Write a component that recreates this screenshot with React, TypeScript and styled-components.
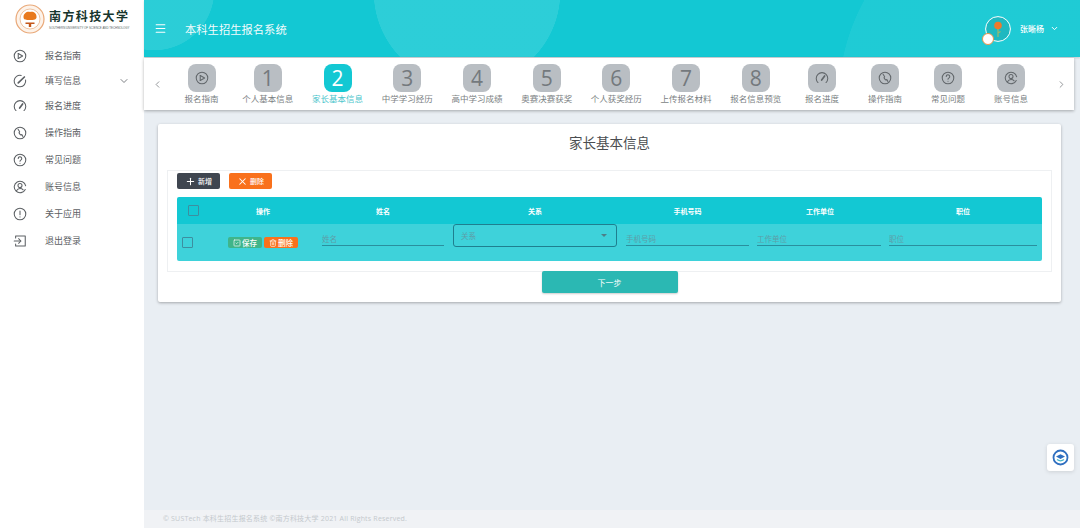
import React from "react";
import styled, { createGlobalStyle } from "styled-components";
import {
  ChevronDown,
  ChevronLeft,
  ChevronRight,
  Menu,
  Plus,
  SquareCheck,
  Trash2,
  X,
} from "lucide-react";

const FONT = `"Noto Sans CJK SC", "Open Sans", "Noto Sans", sans-serif`;
const TEAL = "#13c8d3";

const GlobalStyle = createGlobalStyle`
  html, body {
    margin: 0;
    padding: 0;
    height: 528px;
    overflow: hidden;
    background: #e9eef3;
    font-family: ${FONT};
  }
  * { box-sizing: border-box; }
`;

const Glyph = ({ children }: { children: React.ReactNode }) => (
  <svg
    width="14"
    height="14"
    viewBox="0 0 16 16"
    fill="none"
    stroke="currentColor"
    strokeWidth="1.2"
    strokeLinecap="round"
    strokeLinejoin="round"
  >
    {children}
  </svg>
);

const PlayIcon = () => (
  <Glyph>
    <circle cx="8" cy="8" r="6.6" />
    <path d="M6 5.2 11 8l-5 2.8" />
    <path d="M6 5.2v5.6" />
  </Glyph>
);
const EditIcon = () => (
  <Glyph>
    <path d="M14.4 6.8A6.6 6.6 0 1 1 9.4 1.6" />
    <path d="M6 10.2 13 3.4" strokeWidth="1.9" />
  </Glyph>
);
const GaugeIcon = () => (
  <Glyph>
    <path d="M3.4 13.2a6.6 6.6 0 1 1 9.2 0" />
    <path d="M7.6 10.4 11 5.6" strokeWidth="1.9" />
  </Glyph>
);
const PhoneIcon = () => (
  <Glyph>
    <circle cx="8" cy="8" r="6.6" />
    <path d="M5.8 3.8 7.6 6.6 6.9 7.8c.5 1.2 1.2 2 2.2 2.6l1-.6 1.2 2.2" />
  </Glyph>
);
const HelpIcon = () => (
  <Glyph>
    <circle cx="8" cy="8" r="6.6" />
    <path d="M6 6.3a2 2 0 1 1 3.2 1.6c-.8.5-1.2.9-1.2 1.6" />
    <path d="M8 11.6h.01" />
  </Glyph>
);
const UserIcon = () => (
  <Glyph>
    <path d="M14.5 6.6A6.6 6.6 0 1 0 14 10.8" />
    <circle cx="8" cy="6.4" r="2.3" />
    <path d="M4 12.4c.9-1.8 2.4-2.6 4-2.6 1.4 0 2.7.4 3.6 1.4" />
  </Glyph>
);
const AlertIcon = () => (
  <Glyph>
    <circle cx="8" cy="8" r="6.6" />
    <path d="M8 4.6v4.2" />
    <path d="M8 11.3h.01" />
  </Glyph>
);
const ExitIcon = () => (
  <Glyph>
    <path d="M3 4.6V2.200h11v11.600H3v-2.400" />
    <path d="M1.400 8h7.400" />
    <path d="M6.400 5.400 9 8l-2.600 2.600" />
  </Glyph>
);

const menu = [
  { label: "报名指南", Icon: PlayIcon },
  { label: "填写信息", Icon: EditIcon, arrow: true },
  { label: "报名进度", Icon: GaugeIcon },
  { label: "操作指南", Icon: PhoneIcon },
  { label: "常见问题", Icon: HelpIcon },
  { label: "账号信息", Icon: UserIcon },
  { label: "关于应用", Icon: AlertIcon },
  { label: "退出登录", Icon: ExitIcon },
];

const steps: { label: string; num?: number; Icon?: () => React.JSX.Element; active?: boolean }[] = [
  { label: "报名指南", Icon: PlayIcon },
  { label: "个人基本信息", num: 1 },
  { label: "家长基本信息", num: 2, active: true },
  { label: "中学学习经历", num: 3 },
  { label: "高中学习成绩", num: 4 },
  { label: "奥赛决赛获奖", num: 5 },
  { label: "个人获奖经历", num: 6 },
  { label: "上传报名材料", num: 7 },
  { label: "报名信息预览", num: 8 },
  { label: "报名进度", Icon: GaugeIcon },
  { label: "操作指南", Icon: PhoneIcon },
  { label: "常见问题", Icon: HelpIcon },
  { label: "账号信息", Icon: UserIcon },
];

const columns = ["操作", "姓名", "关系", "手机号码", "工作单位", "职位"];

const Logo = () => (
  <S.Logo>
    <svg width="30" height="30" viewBox="0 0 30 30">
      <circle cx="15" cy="15" r="14" fill="#fdf3ea" stroke="#e9a878" strokeWidth="1.2" />
      <circle cx="15" cy="15" r="10" fill="#fff" stroke="#eab48a" strokeWidth="0.8" />
      <path d="M8.5 13c0-4 4-6 6.500-5 3-1 6.500 1 6.500 4.500 .5 3-2.500 3.500-6.500 3.500s-6.500 0-6.500-3z" fill="#e8791d" />
      <path d="M10.500 18.500h9v1.500h-3.300v3h-2.400v-3h-3.300z" fill="#c4571a" />
    </svg>
    <S.LogoText>
      <S.LogoName>南方科技大学</S.LogoName>
      <S.LogoSub>SOUTHERN UNIVERSITY OF SCIENCE AND TECHNOLOGY</S.LogoSub>
    </S.LogoText>
  </S.Logo>
);

const App = () => (
  <S.Page>
    <GlobalStyle />
    <S.Sidebar>
      <Logo />
      <S.MenuList>
        {menu.map(({ label, Icon, arrow }) => (
          <S.MenuItem key={label}>
            <Icon />
            <span>{label}</span>
            {arrow && <S.MenuArrow size={12} strokeWidth={1.6} />}
          </S.MenuItem>
        ))}
      </S.MenuList>
    </S.Sidebar>

    <S.Main>
      <S.Header>
        <S.HeaderLeft>
          <Menu size={13} strokeWidth={2} />
          <S.AppTitle>本科生招生报名系统</S.AppTitle>
        </S.HeaderLeft>
        <S.User>
          <S.Avatar>
            <svg width="26" height="26" viewBox="0 0 26 26">
              <circle cx="13" cy="13" r="12.4" fill="#1fb8c0" stroke="#fff" strokeWidth="1" />
              <path d="M13 12v9M13 17l2.500-1.500" stroke="#9cb86a" strokeWidth="1.2" fill="none" />
              <circle cx="13" cy="9.500" r="3.800" fill="#ee7a2c" />
            </svg>
            <S.AvatarBadge />
          </S.Avatar>
          <S.UserName>张晰杨</S.UserName>
          <ChevronDown size={9} strokeWidth={2.6} />
        </S.User>
      </S.Header>

      <S.StepBar>
        <S.StepArrow>
          <ChevronLeft size={11} strokeWidth={1.6} />
        </S.StepArrow>
        <S.StepList>
          {steps.map(({ label, num, Icon, active }) => (
            <S.Step key={label} $active={active}>
              <S.StepTile $active={active}>{Icon ? <Icon /> : num}</S.StepTile>
              <S.StepLabel>{label}</S.StepLabel>
            </S.Step>
          ))}
        </S.StepList>
        <S.StepArrow>
          <ChevronRight size={11} strokeWidth={1.6} />
        </S.StepArrow>
      </S.StepBar>

      <S.Content>
        <S.Card>
          <S.CardTitle>家长基本信息</S.CardTitle>
          <S.TableBox>
            <S.Toolbar>
              <S.ToolButton $bg="#3f4650">
                <Plus size={11} strokeWidth={2.2} />
                新增
              </S.ToolButton>
              <S.ToolButton $bg="#f9711c">
                <X size={11} strokeWidth={2.2} />
                删除
              </S.ToolButton>
            </S.Toolbar>
            <S.Table>
              <S.HeadRow>
                <S.HeadCheck>
                  <S.Checkbox />
                </S.HeadCheck>
                {columns.map((c) => (
                  <S.HeadCell key={c}>{c}</S.HeadCell>
                ))}
              </S.HeadRow>
              <S.BodyRow>
                <S.RowCheck>
                  <S.Checkbox />
                </S.RowCheck>
                <S.Actions>
                  <S.SmallButton $bg="#3fb58a">
                    <SquareCheck size={8} strokeWidth={2} />
                    保存
                  </S.SmallButton>
                  <S.SmallButton $bg="#f9711c">
                    <Trash2 size={8} strokeWidth={2} />
                    删除
                  </S.SmallButton>
                </S.Actions>
                <S.Field>
                  <S.Input placeholder="姓名" />
                </S.Field>
                <S.Field $pad="0 4px 14px">
                  <S.Select>
                    关系
                    <S.Caret />
                  </S.Select>
                </S.Field>
                <S.Field>
                  <S.Input placeholder="手机号码" />
                </S.Field>
                <S.Field $pad="0 5px 15px 3px">
                  <S.Input placeholder="工作单位" />
                </S.Field>
                <S.Field $pad="0 3px 15px">
                  <S.Input placeholder="职位" />
                </S.Field>
              </S.BodyRow>
            </S.Table>
          </S.TableBox>
          <S.NextRow>
            <S.NextButton>下一步</S.NextButton>
          </S.NextRow>
        </S.Card>
        <S.FloatButton>
          <svg width="17" height="17" viewBox="0 0 17 17">
            <circle cx="8.5" cy="8.5" r="7" fill="none" stroke="#2f6fc0" strokeWidth="1.8" />
            <path d="M4 7.500 8.500 5.200 13 7.500 8.500 10z" fill="#2f6fc0" />
            <path d="M5 10.500c2.300 1.700 4.700 1.700 7 0" fill="none" stroke="#45b5c8" strokeWidth="1.2" />
          </svg>
        </S.FloatButton>
      </S.Content>

      <S.Footer>© SUSTech 本科生招生报名系统 ©南方科技大学 2021 All Rights Reserved.</S.Footer>
    </S.Main>
  </S.Page>
);

export default App;

const GRID = "32px 108px 132px 172px 133px 132px 154px 2px";

const S = {
  Page: styled.div`
    display: flex;
    width: 1080px;
    height: 528px;
    overflow: hidden;
  `,
  Sidebar: styled.aside`
    flex: 0 0 144px;
    background: #fff;
  `,
  Logo: styled.div`
    display: flex;
    align-items: center;
    gap: 4px;
    height: 38px;
    margin-bottom: -2px;
    padding-left: 15px;
  `,
  LogoText: styled.div`
    display: flex;
    flex-direction: column;
    align-items: flex-start;
    color: #17352d;
  `,
  LogoName: styled.div`
    font-size: 12px;
    line-height: 15px;
    font-weight: 700;
    letter-spacing: 1.4px;
    white-space: nowrap;
  `,
  LogoSub: styled.div`
    margin-top: 3px;
    font-family: "Liberation Sans", sans-serif;
    font-size: 2.9px;
    line-height: 5px;
    white-space: nowrap;
    color: #55665f;
  `,
  MenuList: styled.nav`
    display: flex;
    flex-direction: column;
    padding-top: 7px;
  `,
  MenuItem: styled.div`
    display: flex;
    align-items: center;
    height: 25px;
    padding-left: 13px;
    font-size: 9px;
    color: #5c6064;
    &:nth-child(n + 4) {
      margin-top: 2px;
    }
    span {
      margin-left: 18px;
    }
    svg {
      flex: none;
    }
  `,
  MenuArrow: styled(ChevronDown)`
    margin-left: auto;
    margin-right: 14px;
  `,
  Main: styled.div`
    flex: 1;
    display: flex;
    flex-direction: column;
    min-width: 0;
    height: 528px;
  `,
  Header: styled.header`
    display: flex;
    align-items: center;
    justify-content: space-between;
    flex: 0 0 57px;
    padding: 0 21px 0 10px;
    color: #fff;
    background:
      radial-gradient(circle at 10px -10px, rgba(255, 255, 255, 0.1) 0 60px, transparent 60.5px),
      radial-gradient(circle at 323px -8px, rgba(255, 255, 255, 0.11) 0 93px, transparent 93.5px),
      radial-gradient(circle at 902px 100px, rgba(255, 255, 255, 0.05) 0 207px, transparent 207.5px),
      ${TEAL};
    box-shadow: 0 1px 2px rgba(0, 0, 0, 0.15);
  `,
  HeaderLeft: styled.div`
    display: flex;
    align-items: center;
    gap: 18px;
  `,
  AppTitle: styled.div`
    font-size: 11.3px;
    opacity: 0.95;
  `,
  User: styled.div`
    display: flex;
    align-items: center;
    gap: 6px;
  `,
  Avatar: styled.div`
    position: relative;
    width: 26px;
    height: 26px;
    margin-right: 3px;
  `,
  AvatarBadge: styled.div`
    position: absolute;
    left: -3px;
    bottom: -3px;
    width: 12px;
    height: 12px;
    border-radius: 50%;
    background: #fff;
    border: 1.5px solid #e8944a;
  `,
  UserName: styled.div`
    font-size: 8px;
    font-weight: 500;
  `,
  StepBar: styled.div`
    display: flex;
    align-items: center;
    flex: 0 0 52px;
    margin-top: 1px;
    margin-right: 6px;
    background: #fff;
    box-shadow: 0 1px 3px rgba(0, 0, 0, 0.3);
  `,
  StepArrow: styled.div`
    display: flex;
    align-items: center;
    justify-content: center;
    flex: 0 0 26px;
    color: #6f7377;
  `,
  StepList: styled.div`
    display: flex;
    flex: 1;
    min-width: 0;
  `,
  Step: styled.div<{ $active?: boolean }>`
    display: flex;
    flex-direction: column;
    align-items: center;
    min-width: 63px;
    padding: 0 9.35px;
    color: ${(p) => (p.$active ? "#4cc5cc" : "#7b7f83")};
  `,
  StepTile: styled.div<{ $active?: boolean }>`
    display: flex;
    align-items: center;
    justify-content: center;
    width: 28px;
    height: 28px;
    border-radius: 8px;
    font-family: "Open Sans", sans-serif;
    font-size: 21px;
    font-weight: 400;
    background: ${(p) => (p.$active ? TEAL : "#b9bec3")};
    color: ${(p) => (p.$active ? "#fff" : "#74797d")};
    svg {
      color: #62676b;
    }
  `,
  StepLabel: styled.div`
    font-size: 8.5px;
    line-height: 12px;
    white-space: nowrap;
  `,
  Content: styled.main`
    position: relative;
    flex: 1;
    padding: 14px 19px 0 14px;
  `,
  Card: styled.section`
    display: flex;
    flex-direction: column;
    height: 178px;
    background: #fff;
    border-radius: 2px;
    box-shadow: 0 1px 3px rgba(0, 0, 0, 0.3);
  `,
  CardTitle: styled.h2`
    margin: 0;
    height: 46px;
    line-height: 36px;
    text-align: center;
    font-size: 13.5px;
    font-weight: 400;
    color: #4a4d50;
  `,
  TableBox: styled.div`
    margin: 0 9px;
    height: 102px;
    padding: 2px 9px 0;
    border: 1px solid #eef0f2;
  `,
  Toolbar: styled.div`
    display: flex;
    gap: 9px;
    height: 24px;
  `,
  ToolButton: styled.div<{ $bg: string }>`
    display: flex;
    align-items: center;
    justify-content: center;
    gap: 2px;
    width: 43px;
    height: 16px;
    border-radius: 2px;
    font-size: 7px;
    font-weight: 500;
    color: #fff;
    background: ${(p) => p.$bg};
  `,
  Table: styled.div`
    border-radius: 2px;
    overflow: hidden;
  `,
  HeadRow: styled.div`
    display: grid;
    grid-template-columns: ${GRID};
    align-items: center;
    height: 27px;
    background: ${TEAL};
  `,
  HeadCell: styled.div`
    text-align: center;
    font-size: 7px;
    font-weight: 700;
    color: #fff;
  `,
  HeadCheck: styled.div`
    display: flex;
    justify-content: center;
  `,
  RowCheck: styled.div`
    display: flex;
    padding-left: 5px;
  `,
  Checkbox: styled.div`
    width: 11px;
    height: 11px;
    border: 1.5px solid #3c8fa0;
    border-radius: 1px;
  `,
  BodyRow: styled.div`
    display: grid;
    grid-template-columns: ${GRID};
    align-items: center;
    height: 37px;
    background: #3ed2da;
  `,
  Actions: styled.div`
    display: flex;
    justify-content: center;
    gap: 2px;
  `,
  SmallButton: styled.div<{ $bg: string }>`
    display: flex;
    align-items: center;
    justify-content: center;
    gap: 1px;
    width: 34px;
    height: 11px;
    border-radius: 2px;
    font-size: 7.5px;
    font-weight: 500;
    color: #fff;
    background: ${(p) => p.$bg};
  `,
  Field: styled.div<{ $pad?: string }>`
    display: flex;
    align-items: flex-end;
    height: 100%;
    padding: ${(p) => p.$pad ?? "0 5px 15px"};
  `,
  Input: styled.input`
    width: 100%;
    height: 14px;
    padding: 0 0 1px;
    border: 0;
    border-bottom: 1px solid #2a8f9e;
    border-radius: 0;
    background: transparent;
    outline: none;
    font-family: ${FONT};
    font-size: 7.5px;
    &::placeholder {
      color: #5d9ea8;
      opacity: 1;
    }
  `,
  Select: styled.div`
    position: relative;
    width: 100%;
    height: 23px;
    padding: 5px 0 0 7px;
    border: 1px solid #1f7f8f;
    border-radius: 3px;
    font-size: 7.5px;
    line-height: 11px;
    color: #5d9ea8;
  `,
  Caret: styled.div`
    position: absolute;
    right: 9px;
    top: 9px;
    border-left: 3px solid transparent;
    border-right: 3px solid transparent;
    border-top: 3px solid #4d7f88;
  `,
  NextRow: styled.div`
    display: flex;
    justify-content: center;
    margin-top: -1px;
  `,
  NextButton: styled.div`
    display: flex;
    align-items: center;
    justify-content: center;
    width: 136px;
    height: 22px;
    border-radius: 2px;
    font-size: 8px;
    color: #fff;
    background: #2bb8b3;
    box-shadow: 0 1px 2px rgba(0, 0, 0, 0.2);
  `,
  FloatButton: styled.div`
    position: absolute;
    right: 6px;
    top: 334px;
    display: flex;
    align-items: center;
    justify-content: center;
    width: 27px;
    height: 27px;
    background: #fff;
    border-radius: 3px;
    box-shadow: 0 1px 4px rgba(0, 0, 0, 0.12);
  `,
  Footer: styled.footer`
    flex: 0 0 18px;
    padding-left: 19px;
    font-family: "Open Sans", "Noto Sans CJK SC", sans-serif;
    font-size: 7px;
    line-height: 18px;
    letter-spacing: 0.2px;
    color: #c4c9cd;
    background: #f0f2f5;
  `,
};
